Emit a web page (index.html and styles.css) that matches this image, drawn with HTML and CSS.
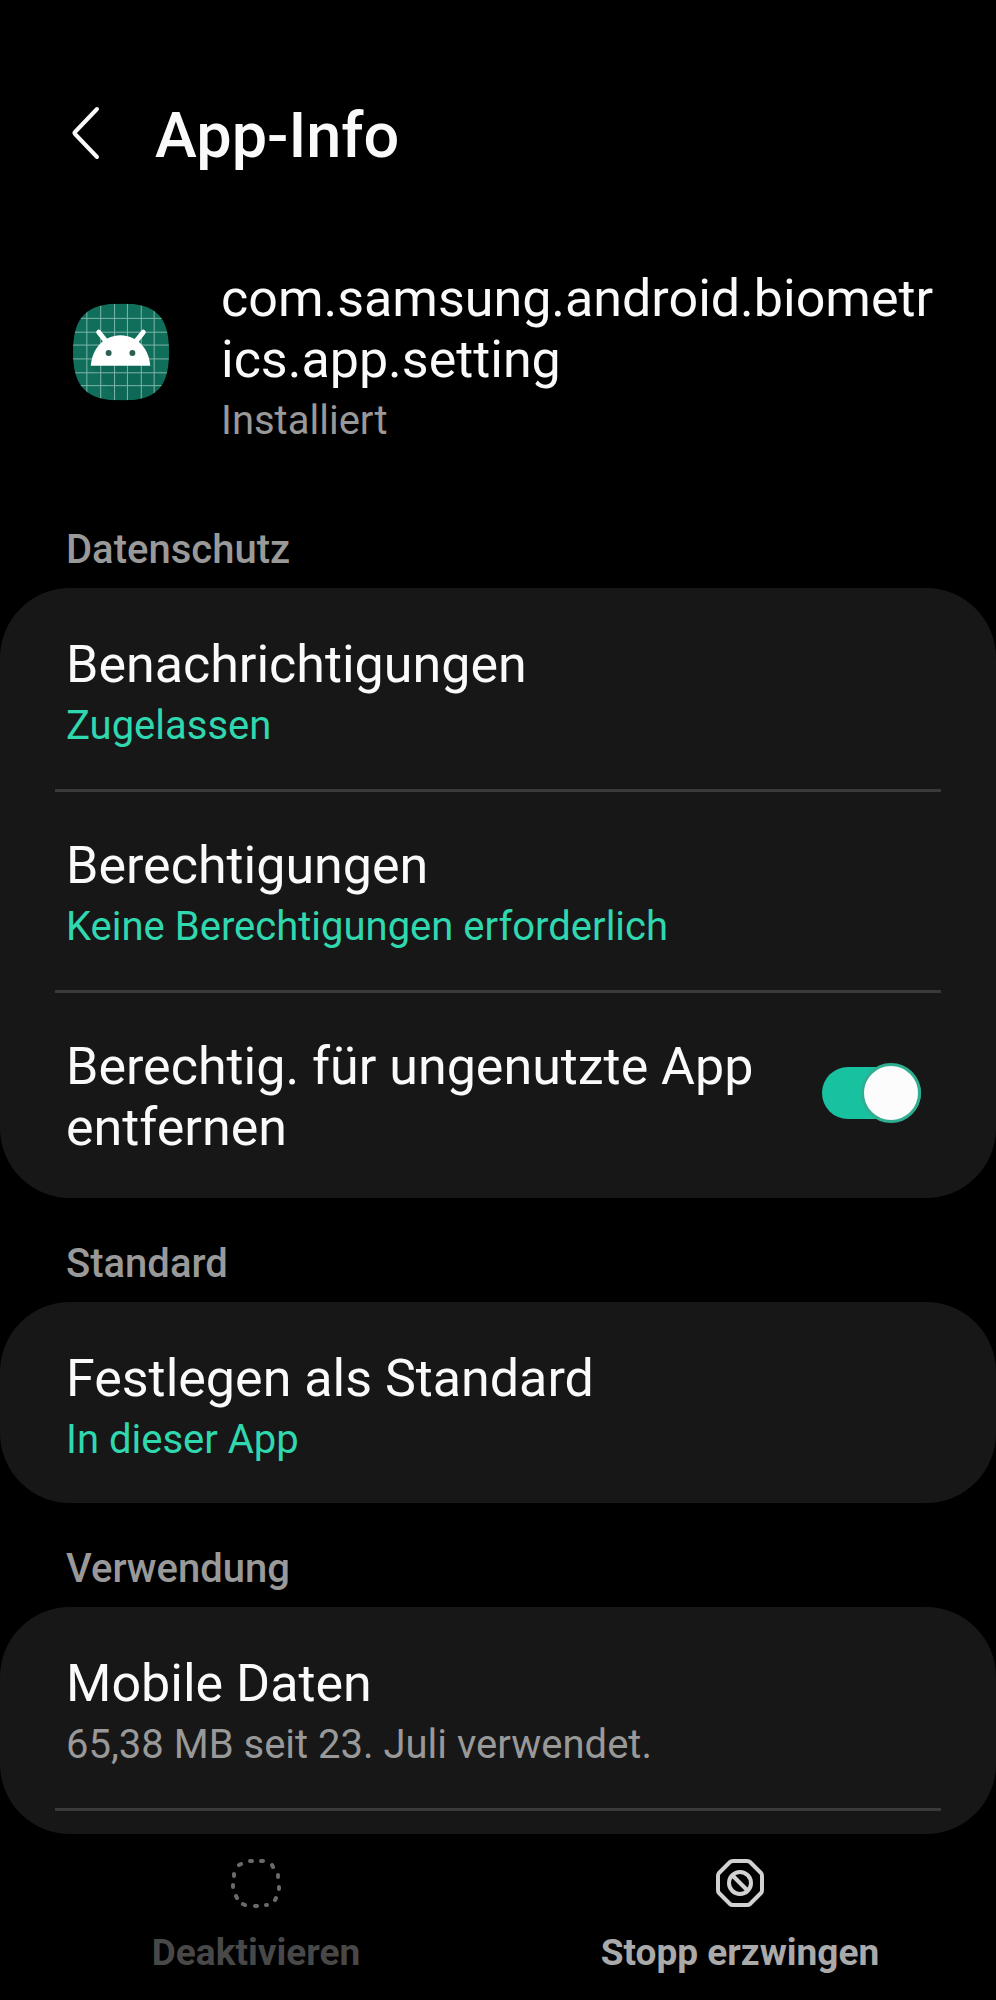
FILE: index.html
```html
<!DOCTYPE html>
<html lang="de">
<head>
<meta charset="UTF-8">
<meta name="viewport" content="width=device-width, initial-scale=1.0">
<title>App-Info</title>
<link rel="stylesheet" href="styles.css">
</head>
<body>

<header class="header">
    <button class="back" type="button" aria-label="Zurück">
        <svg width="30" height="54" viewBox="0 0 30 54" fill="none" stroke="#fafafa" stroke-width="4" stroke-linecap="round" stroke-linejoin="round">
            <path d="M26 3L4 26Q3 27 4 28L26 51"/>
        </svg>
    </button>
    <h1>App-Info</h1>
</header>

<main class="content">
    <section class="app">
        <svg class="app-icon" viewBox="0 0 98 98">
            <defs>
                <clipPath id="squircle">
                    <path d="M49 0C84 0 97 13 97 49S84 98 49 98S0 85 0 49S14 0 49 0Z"/>
                </clipPath>
            </defs>
            <g clip-path="url(#squircle)">
                <rect width="98" height="98" fill="#0f6f5b"/>
                <path d="M49 63H78L98 83V98H45L19 63Z" fill="#0b6350" opacity="0.5"/>
                <path d="M14 0V98M28 0V98M42 0V98M55 0V98M69 0V98M82 0V98M0 15H98M0 29H98M0 42H98M0 56H98M0 70H98M0 83H98" stroke="#7fb5a9" stroke-width="1"/>
            </g>
            <path d="M18 63C19 46 31 32 48 32S77 46 78 63Z" fill="#fff"/>
            <path d="M26 29L34 39M71 29L63 39" stroke="#fff" stroke-width="5" stroke-linecap="round"/>
            <circle cx="36" cy="50" r="3" fill="#2c5e53"/>
            <circle cx="60" cy="50" r="3" fill="#2c5e53"/>
        </svg>
        <div class="app-text">
            <h2 class="title">com.samsung.android.biometrics.app.setting</h2>
            <p class="sub">Installiert</p>
        </div>
    </section>

    <h2 class="section-title">Datenschutz</h2>
    <div class="card">
        <div class="row">
            <div class="title">Benachrichtigungen</div>
            <div class="sub accent">Zugelassen</div>
        </div>
        <div class="row">
            <div class="title">Berechtigungen</div>
            <div class="sub accent">Keine Berechtigungen erforderlich</div>
        </div>
        <div class="row row-switch">
            <label class="title" for="unused">Berechtig. für ungenutzte App entfernen</label>
            <input class="switch" type="checkbox" id="unused" checked>
        </div>
    </div>

    <h2 class="section-title">Standard</h2>
    <div class="card">
        <div class="row">
            <div class="title">Festlegen als Standard</div>
            <div class="sub accent">In dieser App</div>
        </div>
    </div>

    <h2 class="section-title">Verwendung</h2>
    <div class="card card-last">
        <div class="row">
            <div class="title">Mobile Daten</div>
            <div class="sub">65,38 MB seit 23. Juli verwendet.</div>
        </div>
        <div class="row row-cut"></div>
    </div>
</main>

<footer class="actions">
    <button class="action" type="button" disabled>
        <svg width="52" height="52" viewBox="0 0 52 52" fill="none" stroke="#6a6a6a" stroke-width="4" stroke-linecap="round">
            <path d="M20 4L22 4M31 4L33 4M42 8L43 10M48 18L48 20M49 30L49 32M46 41L45 43M36 48L37 48M25 49L27 49M13 47L15 48M6 39L7 41M3 28L3 30M4 17L4 19M9 8L11 7"/>
        </svg>
        Deaktivieren
    </button>
    <button class="action" type="button">
        <svg width="52" height="52" viewBox="0 0 52 52" fill="none" stroke="#d2d2d2" stroke-width="4" stroke-linejoin="round">
            <path d="M19 4H33Q35 4 36 5L47 16Q48 17 48 19V33Q48 35 47 36L36 47Q35 48 33 48H19Q17 48 16 47L5 36Q4 35 4 33V19Q4 17 5 16L16 5Q17 4 19 4Z"/>
            <circle cx="26" cy="26" r="11"/>
            <path d="M18 18L34 34"/>
        </svg>
        Stopp erzwingen
    </button>
</footer>

</body>
</html>
```
FILE: styles.css
```css
*,
*::before {
    box-sizing: border-box;
}

body {
    margin: 0;
    min-height: 100vh;
    display: flex;
    flex-direction: column;
    background-color: #000;
    color: #fafafa;
    font-family: Roboto, "Noto Sans", sans-serif;
}

h1,
h2,
p {
    margin: 0;
}

button {
    padding: 0;
    border: none;
    background: none;
    font-family: inherit;
    cursor: pointer;
}

.header {
    display: flex;
    align-items: center;
    gap: 54px;
    padding: 98px 60px 0 71px;
}

.header h1 {
    font-size: 63px;
    line-height: 76px;
    font-weight: 500;
}

.back {
    display: flex;
    padding-bottom: 6px;
}

.content {
    flex: 1;
    display: flex;
    flex-direction: column;
}

.app {
    display: flex;
    align-items: center;
    gap: 51px;
    padding: 94px 60px 40px 73px;
}

.app-icon {
    flex: none;
    width: 97px;
    height: 98px;
    margin-bottom: 8px;
}

.app-text {
    word-break: break-all;
}

.title {
    font-size: 52px;
    line-height: 61px;
    font-weight: 400;
}

.sub {
    margin-top: 7px;
    font-size: 40px;
    line-height: 47px;
    color: #999;
}

.accent {
    color: #30d8b0;
}

.section-title {
    padding: 42px 66px 15px;
    font-size: 40px;
    line-height: 47px;
    font-weight: 500;
    color: #999;
}

.card {
    padding: 0 55px;
    border-radius: 70px;
    background-color: #171717;
}

.card-last {
    flex: 1;
}

.row {
    padding: 46px 11px 40px;
}

.row + .row {
    border-top: 3px solid #3a3a3a;
    padding-top: 43px;
}

.row-switch {
    display: flex;
    align-items: center;
    justify-content: space-between;
    gap: 40px;
}

/* next entry, cut off by the action bar */
.row-cut,
.row + .row-cut {
    padding: 0 0 23px;
}

.switch {
    appearance: none;
    position: relative;
    flex: none;
    width: 99px;
    height: 52px;
    margin: 0 9px 8px;
    border-radius: 26px;
    background-color: #555;
    cursor: pointer;
}

.switch::before {
    content: "";
    position: absolute;
    top: -4px;
    left: 0;
    width: 60px;
    height: 60px;
    border: 3px solid #555;
    border-radius: 50%;
    background-color: #fcfcfc;
}

.switch:checked {
    background-color: #18c1a0;
}

.switch:checked::before {
    left: auto;
    right: 0;
    border-color: #2fae91;
}

.actions {
    display: flex;
    padding: 23px 14px 24px;
}

.action {
    flex: 1;
    display: flex;
    flex-direction: column;
    align-items: center;
    gap: 20px;
    font-size: 37px;
    line-height: 47px;
    font-weight: 700;
    color: #aaa;
}

.action:disabled {
    color: #484848;
    cursor: default;
}
```
